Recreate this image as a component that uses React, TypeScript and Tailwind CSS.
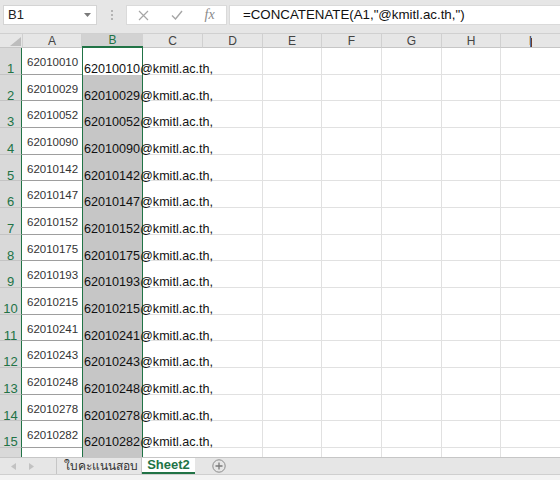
import React from 'react';

const ids = [
  '62010010', '62010029', '62010052', '62010090', '62010142',
  '62010147', '62010152', '62010175', '62010193', '62010215',
  '62010241', '62010243', '62010248', '62010278', '62010282',
];

const GREEN = 'text-[#217346]';

// Empty cells to the right of the overflowing text (C has no right line there)
const RestCells: React.FC = () => (
  <>
    <div className="w-[60px] shrink-0 border-b border-[#e1e1e1]" />
    <div className="w-[60px] shrink-0 border-b border-r border-[#e1e1e1]" />
    <div className="w-[59px] shrink-0 border-b border-r border-[#e1e1e1]" />
    <div className="w-[60px] shrink-0 border-b border-r border-[#e1e1e1]" />
    <div className="w-[60px] shrink-0 border-b border-r border-[#e1e1e1]" />
    <div className="w-[59px] shrink-0 border-b border-r border-[#e1e1e1]" />
    <div className="flex-1 border-b border-[#e1e1e1]" />
  </>
);

const App: React.FC = () => {
  return (
    <div
      className="relative w-[560px] h-[480px] flex flex-col bg-white overflow-hidden"
      style={{ fontFamily: '"Liberation Sans", Arial, sans-serif' }}
    >
      {/* Formula bar */}
      <div className="h-[33px] shrink-0 bg-[#e6e6e6] flex items-start pt-[5px] pl-[3px]">
        <div className="w-[94px] h-[20px] bg-white border border-[#d4d4d4] flex items-center justify-between pl-[4px] pr-[5px]">
          <span className="text-[13px] text-[#222]">B1</span>
          <svg width="7" height="4" viewBox="0 0 7 4">
            <path d="M0 0h7L3.5 4z" fill="#7a7a7a" />
          </svg>
        </div>
        <div className="w-[29px] h-[20px] flex flex-col items-center justify-center gap-[2px]">
          <span className="w-[2px] h-[2px] bg-[#b4b4b4]" />
          <span className="w-[2px] h-[2px] bg-[#b4b4b4]" />
          <span className="w-[2px] h-[2px] bg-[#b4b4b4]" />
        </div>
        <div className="w-[101px] h-[20px] bg-white border border-[#dadada] flex items-center">
          <div className="w-[33px] flex justify-center">
            <svg width="11" height="11" viewBox="0 0 11 11">
              <path d="M1 1l9 9M10 1l-9 9" stroke="#a6a6a6" strokeWidth="1.2" />
            </svg>
          </div>
          <div className="w-[34px] flex justify-center">
            <svg width="12" height="10" viewBox="0 0 12 10">
              <path d="M1 5.5l3.5 3.5L11 1" stroke="#a6a6a6" strokeWidth="1.4" fill="none" />
            </svg>
          </div>
          <div className="w-[33px] flex justify-center">
            <span
              className="italic text-[14px] text-[#8a8a8a] leading-none"
              style={{ fontFamily: '"Liberation Serif", "Times New Roman", serif' }}
            >
              fx
            </span>
          </div>
        </div>
        <div className="ml-[2px] flex-1 h-[20px] bg-white border border-[#dadada] border-r-0 flex items-center pl-[13px]">
          <span className="text-[13.3px] text-[#111] whitespace-nowrap">
            =CONCATENATE(A1,"@kmitl.ac.th,")
          </span>
        </div>
      </div>

      {/* Column headers */}
      <div className="h-[15px] shrink-0 flex bg-[#e6e6e6] border-t border-[#d0d0d0] text-[12px] text-[#444]">
        <div className="w-[22px] shrink-0 flex items-end justify-end pr-[1px] pb-[1px] border-b border-[#c6c6c6]">
          <svg width="11" height="9" viewBox="0 0 11 9">
            <path d="M11 0V9H0z" fill="#bdbdbd" />
          </svg>
        </div>
        <div className="w-[60px] shrink-0 flex items-center justify-center border-l border-r border-b border-[#d0d0d0] border-b-[#c6c6c6]">A</div>
        <div className={`w-[61px] shrink-0 flex items-center justify-center bg-[#d2d2d2] border-b-2 border-[#217346] ${GREEN}`}>B</div>
        {['C', 'D', 'E', 'F', 'G', 'H'].map((c, i) => (
          <div
            key={c}
            className={`${i === 2 || i === 5 ? 'w-[59px]' : 'w-[60px]'} shrink-0 flex items-center justify-center border-r border-b border-[#d0d0d0] border-b-[#c6c6c6]`}
          >
            {c}
          </div>
        ))}
        <div className="flex-1 flex items-center justify-center border-b border-[#c6c6c6]">I</div>
      </div>

      {/* Grid */}
      <div className="flex-1 flex flex-col overflow-hidden">
        {ids.map((id, i) => (
          <div key={id} className="h-[26.67px] shrink-0 flex">
            <div className={`w-[22px] shrink-0 bg-[#d9d9d9] border-r border-[#217346] border-b border-b-[#c4c4c4] flex items-start justify-center pt-[14px] text-[13px] leading-none ${GREEN}`}>
              {i + 1}
            </div>
            <div className="w-[60px] shrink-0 bg-white border-b border-[#9e9e9e] flex items-start pl-[5px] pt-[9px] text-[11.5px] leading-none text-[#333]">
              {id}
            </div>
            <div
              className={`relative z-10 w-[61px] shrink-0 border-x border-[#217346] flex items-start pl-[1px] pt-[15px] text-[12.6px] leading-none text-[#111] whitespace-nowrap overflow-visible ${
                i === 0 ? 'bg-white' : 'bg-[#c6c6c6]'
              }`}
            >
              <span>{id}@kmitl.ac.th,</span>
            </div>
            <RestCells />
          </div>
        ))}
        <div className="flex-1 flex">
          <div className="w-[22px] shrink-0 bg-[#d9d9d9] border-r border-[#217346]" />
          <div className="w-[60px] shrink-0 bg-white" />
          <div className="w-[61px] shrink-0 bg-[#c6c6c6] border-x border-[#217346]" />
          <div className="w-[60px] shrink-0" />
          <div className="w-[60px] shrink-0 border-r border-[#e1e1e1]" />
          <div className="w-[59px] shrink-0 border-r border-[#e1e1e1]" />
          <div className="w-[60px] shrink-0 border-r border-[#e1e1e1]" />
          <div className="w-[60px] shrink-0 border-r border-[#e1e1e1]" />
          <div className="w-[59px] shrink-0 border-r border-[#e1e1e1]" />
          <div className="flex-1" />
        </div>
      </div>

      {/* Sheet tabs */}
      <div className="h-[17px] shrink-0 bg-[#e6e6e6] border-t border-[#c6c6c6] flex items-stretch">
        <div className="w-[57px] shrink-0 flex items-center border-r border-[#c6c6c6]">
          <svg className="ml-[11px]" width="5" height="7" viewBox="0 0 5 7">
            <path d="M5 0v7L0 3.5z" fill="#c2c2c2" />
          </svg>
          <svg className="ml-[13px]" width="5" height="7" viewBox="0 0 5 7">
            <path d="M0 0v7l5-3.5z" fill="#c2c2c2" />
          </svg>
        </div>
        <div
          className="w-[85px] shrink-0 flex items-center pl-[7px] text-[12px] text-[#333] border-r border-[#c6c6c6]"
          style={{ fontFamily: '"Noto Sans", "Liberation Sans", sans-serif' }}
        >
          ใบคะแนนสอบ
        </div>
        <div className={`w-[53px] shrink-0 bg-white border-b-2 border-[#217346] flex items-center justify-center font-bold text-[13px] ${GREEN}`}>
          Sheet2
        </div>
        <div className="ml-[17px] flex items-center">
          <svg width="14" height="14" viewBox="0 0 14 14">
            <circle cx="7" cy="7" r="6.2" fill="none" stroke="#8c8c8c" strokeWidth="1" />
            <path d="M7 3.5v7M3.5 7h7" stroke="#7a7a7a" strokeWidth="1.3" />
          </svg>
        </div>
      </div>
      <div className="h-[6px] shrink-0 bg-[#f3f3f3] border-t border-[#cfcfcf]" />

      {/* mouse I-beam */}
      <div className="absolute left-[530px] top-[38px] w-[2px] h-[9px] bg-[#6b3b2a] border-l border-[#4a6fa5]" />
    </div>
  );
};

export default App;
